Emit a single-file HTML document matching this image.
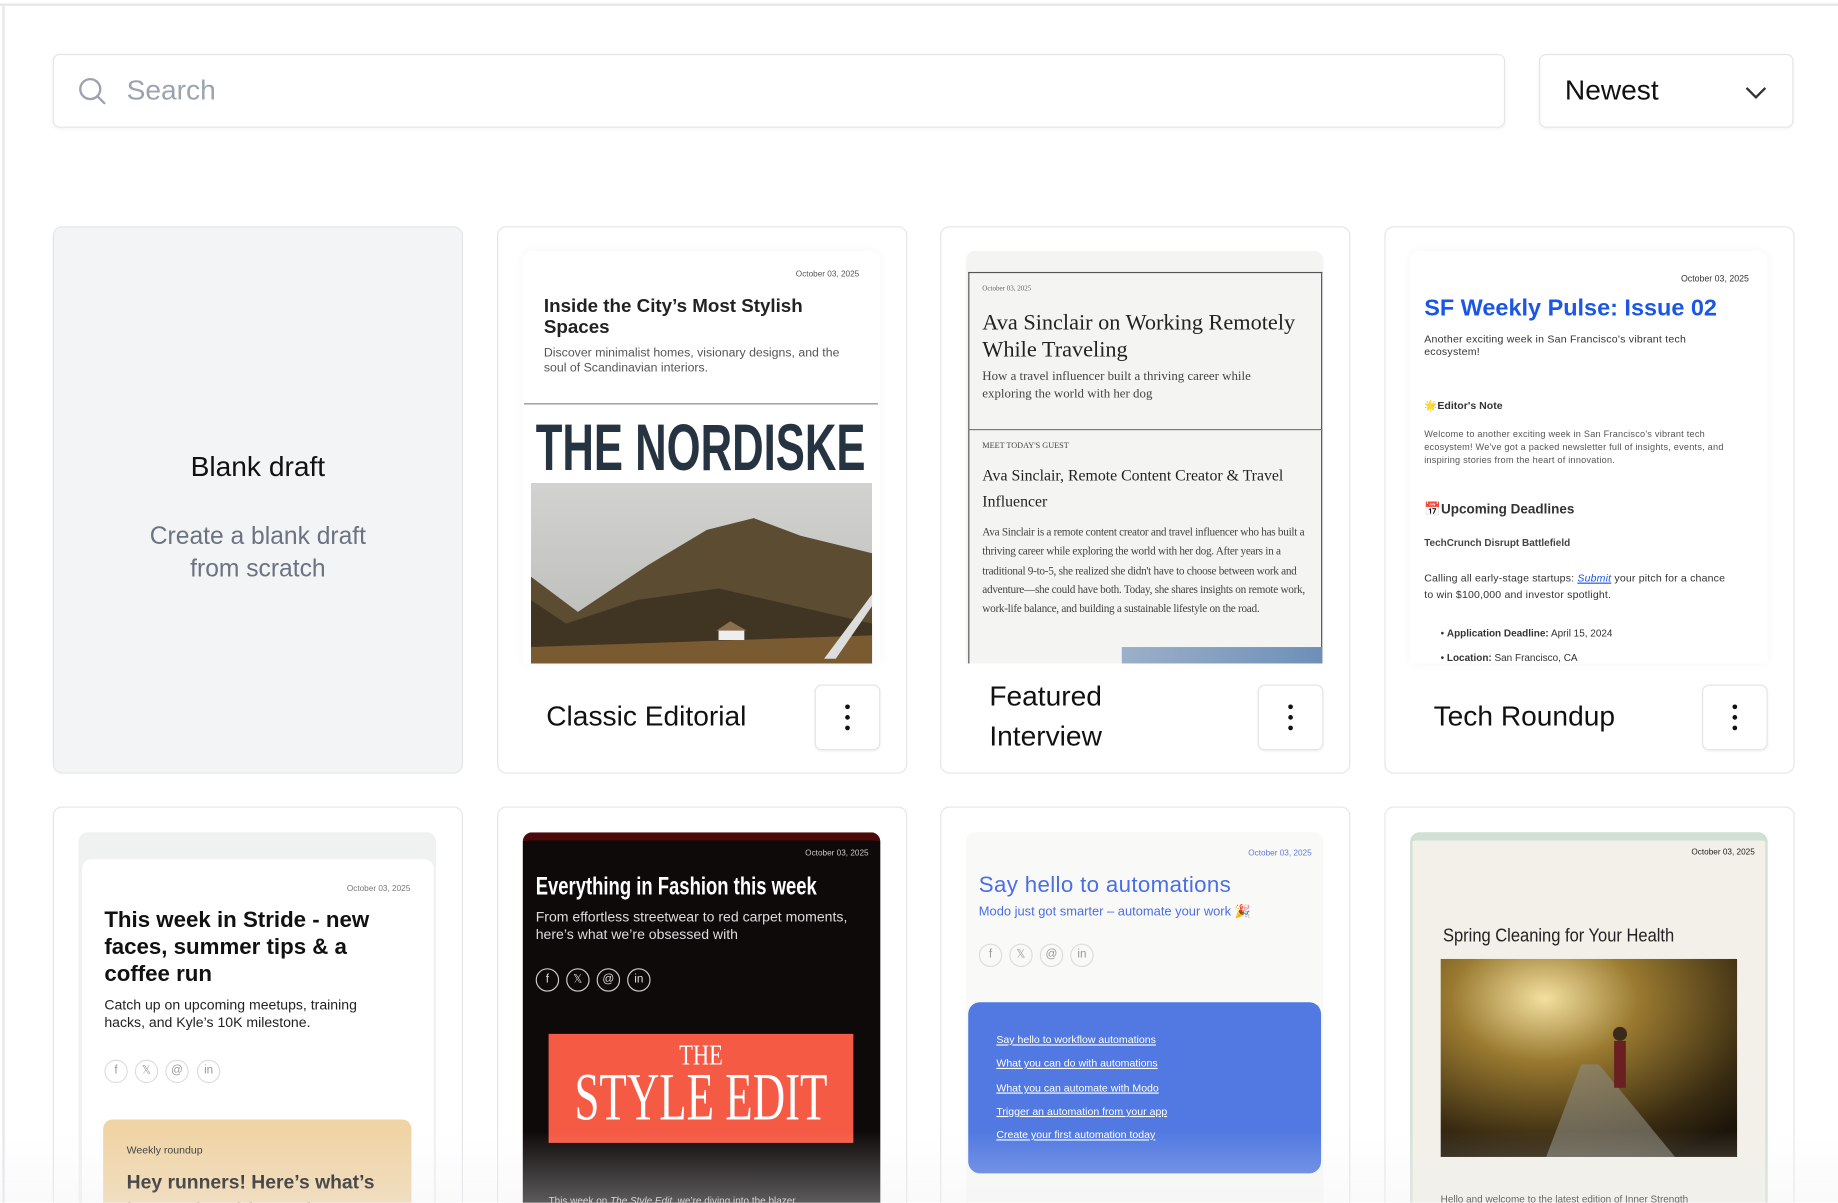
<!DOCTYPE html>
<html><head><meta charset="utf-8">
<style>
*{box-sizing:border-box;margin:0;padding:0}
html,body{width:1838px;height:1202px;overflow:hidden;background:#fff;font-family:"Liberation Sans",sans-serif}
#w{position:absolute;left:0;top:0;width:1568px;height:1026px;transform:scale(1.17219);transform-origin:0 0;overflow:hidden}
.a{position:absolute}
.card{position:absolute;width:350px;border:1.5px solid #e3e5e8;border-radius:8px;background:#fff;overflow:hidden}
.btn{position:absolute;width:56px;height:56px;border:1.5px solid #e3e5e8;border-radius:6px;background:#fff;box-shadow:0 1px 2px rgba(0,0,0,.06)}
.btn i{position:absolute;left:25px;width:4px;height:4px;border-radius:2px;background:#111}
.ttl{position:absolute;font-size:24px;color:#111;line-height:34px}
.cond{display:inline-block;transform-origin:0 0;white-space:nowrap}
.soc{position:absolute;width:20px;height:20px;border-radius:50%;border:1px solid #ddd;font-size:10px;text-align:center;line-height:18px;color:#999}
.lnk{position:absolute;left:24px;font-size:9px;color:#fff;text-decoration:underline}
.ctr{position:absolute;left:50%;white-space:nowrap}
</style></head><body><div id="w">
<div class="a" style="left:0;top:3px;width:1568px;height:2px;background:#e6e7ea"></div>
<div class="a" style="left:2px;top:3px;width:1.5px;height:1030px;background:#e6e7ea"></div>

<div class="a" style="left:45px;top:46px;width:1239px;height:63px;border:1.5px solid #e3e5e8;border-radius:6px;box-shadow:0 1px 3px rgba(0,0,0,.05)">
<svg class="a" style="left:20px;top:18px" width="26" height="26" viewBox="0 0 26 26"><circle cx="11" cy="11" r="8.5" fill="none" stroke="#9ca3af" stroke-width="2"/><path d="M17.5 17.5L23 23" stroke="#9ca3af" stroke-width="2" stroke-linecap="round"/></svg>
<div class="a" style="left:62px;top:17px;font-size:24px;color:#9ca3af">Search</div></div>
<div class="a" style="left:1313px;top:46px;width:217px;height:63px;border:1.5px solid #e3e5e8;border-radius:6px;box-shadow:0 1px 3px rgba(0,0,0,.05)">
<div class="a" style="left:21px;top:17px;font-size:24px;color:#111">Newest</div>
<svg class="a" style="left:174px;top:25px" width="20" height="14" viewBox="0 0 20 14"><path d="M2 3l8 8 8-8" fill="none" stroke="#333" stroke-width="2"/></svg></div>

<div class="card" style="left:45px;top:193px;height:467px;background:#f3f4f6">
<div class="a" style="left:0;width:100%;top:191px;text-align:center;font-size:24px;color:#111">Blank draft</div>
<div class="a" style="left:0;width:100%;top:250px;text-align:center;font-size:21px;line-height:28px;color:#6b7280">Create a blank draft<br>from scratch</div></div>

<div class="card" style="left:424px;top:193px;height:467px">
<div class="a" style="left:21px;top:20px;width:305px;height:352px;background:#fff;border-radius:8px 8px 0 0;box-shadow:0 0 8px rgba(0,0,0,.04)">
<div class="a" style="right:18px;top:17px;font-size:7px;color:#555">October 03, 2025</div>
<div class="a" style="left:18px;top:39px;width:260px;font-size:16px;font-weight:bold;line-height:18px;color:#222">Inside the City’s Most Stylish Spaces</div>
<div class="a" style="left:18px;top:81px;width:270px;font-size:10.5px;line-height:13px;color:#555">Discover minimalist homes, visionary designs, and the soul of Scandinavian interiors.</div>
<div class="a" style="left:1px;top:130px;width:302px;height:1px;background:#888"></div>
<div class="a" style="left:11px;top:136px;font-size:56px;font-weight:bold;color:#263340;line-height:64px"><span class="cond" style="transform:scaleX(.665)">THE NORDISKE</span></div>
<svg class="a" style="left:7px;top:198px" width="291" height="154" viewBox="0 0 291 154"><defs><linearGradient id="sk" x1="0" y1="0" x2="0" y2="1"><stop offset="0" stop-color="#d2d2d0"/><stop offset="1" stop-color="#b9bab6"/></linearGradient></defs><rect width="291" height="154" fill="url(#sk)"/><path d="M0 80 L40 110 L100 70 L150 40 L190 30 L230 45 L291 60 L291 154 L0 154Z" fill="#5b4c32"/><path d="M0 100 L30 120 L90 100 L160 90 L291 120 L291 154 L0 154Z" fill="#3f3522"/><path d="M0 140 L291 130 L291 154 L0 154Z" fill="#7a5a30"/><path d="M250 150 L291 95 L291 105 L260 150Z" fill="#ddd"/><rect x="160" y="125" width="22" height="9" fill="#eee"/><path d="M158 126l12-8 14 8z" fill="#8a7050"/></svg>
</div>
<div class="ttl" style="left:41px;top:401px">Classic Editorial</div>
<div class="btn" style="left:270px;top:390px"><i style="top:16px"></i><i style="top:25px"></i><i style="top:34px"></i></div></div>

<div class="card" style="left:802px;top:193px;height:467px">
<div class="a" style="left:21px;top:20px;width:305px;height:352px;background:#f4f4f2;border-radius:8px 8px 0 0;font-family:'Liberation Serif',serif;color:#222">
<div class="a" style="left:2px;top:18px;width:302px;height:334px;border:1px solid #555;border-bottom:none"></div>
<div class="a" style="left:2px;top:152px;width:302px;height:1px;background:#777"></div>
<div class="a" style="left:14px;top:30px;font-size:6px;color:#666">October 03, 2025</div>
<div class="a" style="left:14px;top:50px;width:285px;font-size:19px;line-height:23px">Ava Sinclair on Working Remotely While Traveling</div>
<div class="a" style="left:14px;top:100px;width:260px;font-size:11px;line-height:15px;color:#444">How a travel influencer built a thriving career while exploring the world with her dog</div>
<div class="a" style="left:14px;top:162px;font-size:7px;color:#444">MEET TODAY'S GUEST</div>
<div class="a" style="left:14px;top:181px;width:285px;font-size:13.5px;line-height:22px">Ava Sinclair, Remote Content Creator &amp; Travel Influencer</div>
<div class="a" style="left:14px;top:233px;width:292px;font-size:9.6px;letter-spacing:-.25px;line-height:16.3px;color:#444">Ava Sinclair is a remote content creator and travel influencer who has built a thriving career while exploring the world with her dog. After years in a traditional 9-to-5, she realized she didn't have to choose between work and adventure—she could have both. Today, she shares insights on remote work, work-life balance, and building a sustainable lifestyle on the road.</div>
<div class="a" style="left:133px;top:338px;width:171px;height:14px;background:linear-gradient(90deg,#9bb0c8,#6d8fb8)"></div>
</div>
<div class="ttl" style="left:41px;top:384px">Featured<br>Interview</div>
<div class="btn" style="left:270px;top:390px"><i style="top:16px"></i><i style="top:25px"></i><i style="top:34px"></i></div></div>

<div class="card" style="left:1181px;top:193px;height:467px">
<div class="a" style="left:21px;top:20px;width:305px;height:352px;background:#fff;border-radius:8px 8px 0 0;box-shadow:0 0 8px rgba(0,0,0,.04);color:#333">
<div class="a" style="right:16px;top:19px;font-size:7.5px">October 03, 2025</div>
<div class="a" style="left:12px;top:38px;font-size:20px;font-weight:bold;color:#1a56e8">SF Weekly Pulse: Issue 02</div>
<div class="a" style="left:12px;top:70px;width:255px;font-size:9px;line-height:11px;letter-spacing:.2px">Another exciting week in San Francisco's vibrant tech ecosystem!</div>
<div class="a" style="left:12px;top:127px;font-size:9px;font-weight:bold">🌟Editor's Note</div>
<div class="a" style="left:12px;top:151px;width:275px;font-size:7.8px;letter-spacing:.2px;line-height:11px;color:#555">Welcome to another exciting week in San Francisco's vibrant tech ecosystem! We've got a packed newsletter full of insights, events, and inspiring stories from the heart of innovation.</div>
<div class="a" style="left:12px;top:213px;font-size:11.5px;font-weight:bold">📅Upcoming Deadlines</div>
<div class="a" style="left:12px;top:244px;font-size:8.5px;font-weight:bold;color:#444">TechCrunch Disrupt Battlefield</div>
<div class="a" style="left:12px;top:272px;width:262px;font-size:9px;line-height:14px;letter-spacing:.15px">Calling all early-stage startups: <u style="color:#1a56e8;font-style:italic">Submit</u> your pitch for a chance to win $100,000 and investor spotlight.</div>
<div class="a" style="left:26px;top:321px;font-size:8.5px">• <b>Application Deadline:</b> April 15, 2024</div>
<div class="a" style="left:26px;top:342px;font-size:8.5px">• <b>Location:</b> San Francisco, CA</div>
</div>
<div class="ttl" style="left:41px;top:401px">Tech Roundup</div>
<div class="btn" style="left:270px;top:390px"><i style="top:16px"></i><i style="top:25px"></i><i style="top:34px"></i></div></div>

<div class="card" style="left:45px;top:688px;height:345px">
<div class="a" style="left:21px;top:21px;width:305px;height:330px;background:#f0f1f1;border-radius:8px 8px 0 0">
<div class="a" style="left:3px;top:23px;width:300px;height:310px;background:#fff;border-radius:8px 8px 0 0">
<div class="a" style="right:20px;top:22px;font-size:7px;color:#777">October 03, 2025</div>
<div class="a" style="left:19px;top:41px;width:250px;font-size:19px;font-weight:bold;line-height:23px;color:#111">This week in Stride - new faces, summer tips &amp; a coffee run</div>
<div class="a" style="left:19px;top:117px;width:250px;font-size:12px;line-height:15px;color:#222">Catch up on upcoming meetups, training hacks, and Kyle’s 10K milestone.</div>
<div class="soc" style="left:19px;top:171px">f</div><div class="soc" style="left:45px;top:171px">𝕏</div><div class="soc" style="left:71px;top:171px">@</div><div class="soc" style="left:98px;top:171px">in</div>
<div class="a" style="left:18px;top:222px;width:263px;height:120px;background:#f0d4a6;border-radius:8px 8px 0 0">
<div class="a" style="left:20px;top:21px;font-size:9px;color:#333">Weekly roundup</div>
<div class="a" style="left:20px;top:42px;font-size:16.5px;font-weight:bold;color:#111;line-height:24px">Hey runners! Here’s what’s happening this week</div></div>
</div></div></div>

<div class="card" style="left:424px;top:688px;height:345px">
<div class="a" style="left:21px;top:21px;width:305px;height:330px;background:#0e0a0a;border-radius:8px 8px 0 0;border-top:7px solid #4a0a0a;color:#fff">
<div class="a" style="right:10px;top:8px;font-size:7px;color:#ccc">October 03, 2025</div>
<div class="a" style="left:11px;top:28px;font-size:21px;font-weight:bold"><span class="cond" style="transform:scaleX(.75)">Everything in Fashion this week</span></div>
<div class="a" style="left:11px;top:58px;width:285px;font-size:12px;line-height:15px;color:#ddd">From effortless streetwear to red carpet moments, here’s what we’re obsessed with</div>
<div class="soc" style="left:11px;top:109px;border-color:#ccc;color:#ddd">f</div><div class="soc" style="left:37px;top:109px;border-color:#ccc;color:#ddd">𝕏</div><div class="soc" style="left:63px;top:109px;border-color:#ccc;color:#ddd">@</div><div class="soc" style="left:89px;top:109px;border-color:#ccc;color:#ddd">in</div>
<div class="a" style="left:22px;top:165px;width:260px;height:93px;background:#f55a45;font-family:'Liberation Serif',serif">
<div class="ctr" style="top:6px;font-size:24px;transform:translateX(-50%) scaleX(.8)">THE</div>
<div class="ctr" style="top:24px;font-size:58px;line-height:60px;transform:translateX(-50%) scaleX(.66)">STYLE EDIT</div></div>
<div class="a" style="left:22px;top:302px;font-size:8.5px;color:#ccc">This week on <i>The Style Edit</i>, we’re diving into the blazer</div>
</div></div>

<div class="card" style="left:802px;top:688px;height:345px">
<div class="a" style="left:21px;top:21px;width:305px;height:330px;background:#f9f9f7;border-radius:8px 8px 0 0">
<div class="a" style="right:10px;top:15px;font-size:7px;color:#5a7be0">October 03, 2025</div>
<div class="a" style="left:11px;top:35px;font-size:19px;color:#4a6ee6;letter-spacing:.3px">Say hello to automations</div>
<div class="a" style="left:11px;top:61px;font-size:11px;color:#4a6ee6">Modo just got smarter – automate your work 🎉</div>
<div class="soc" style="left:11px;top:95px">f</div><div class="soc" style="left:37px;top:95px">𝕏</div><div class="soc" style="left:63px;top:95px">@</div><div class="soc" style="left:89px;top:95px">in</div>
<div class="a" style="left:2px;top:145px;width:301px;height:146px;background:#5179e1;border-radius:10px">
<div class="lnk" style="top:27px">Say hello to workflow automations</div>
<div class="lnk" style="top:47px">What you can do with automations</div>
<div class="lnk" style="top:68px">What you can automate with Modo</div>
<div class="lnk" style="top:88px">Trigger an automation from your app</div>
<div class="lnk" style="top:108px">Create your first automation today</div></div>
</div></div>

<div class="card" style="left:1181px;top:688px;height:345px">
<div class="a" style="left:21px;top:21px;width:305px;height:330px;background:#f2f0e8;border-radius:8px 8px 0 0;border:2px solid #d0e1d4;border-top-width:7px;color:#222">
<div class="a" style="right:9px;top:7px;font-size:7px">October 03, 2025</div>
<div class="a" style="left:26px;top:73px;font-size:16px"><span class="cond" style="transform:scaleX(.88)">Spring Cleaning for Your Health</span></div>
<svg class="a" style="left:24px;top:101px" width="253" height="169" viewBox="0 0 253 169"><defs><radialGradient id="fs" cx=".35" cy=".2" r=".9"><stop offset="0" stop-color="#f3e0a0"/><stop offset=".35" stop-color="#9a7a30"/><stop offset=".8" stop-color="#3a2c12"/><stop offset="1" stop-color="#1c150a"/></radialGradient></defs><rect width="253" height="169" fill="url(#fs)"/><path d="M90 169 L120 90 L135 90 L200 169Z" fill="#8c8a80" opacity=".6"/><rect x="148" y="70" width="10" height="40" fill="#6a2020"/><circle cx="153" cy="64" r="6" fill="#3a2a1a"/></svg>
<div class="a" style="left:24px;top:301px;font-size:8.5px">Hello and welcome to the latest edition of Inner Strength</div>
</div></div>

<div class="a" style="left:0;top:965px;width:1568px;height:61px;background:linear-gradient(rgba(255,255,255,0),rgba(240,240,242,.35))"></div>
</div></body></html>
